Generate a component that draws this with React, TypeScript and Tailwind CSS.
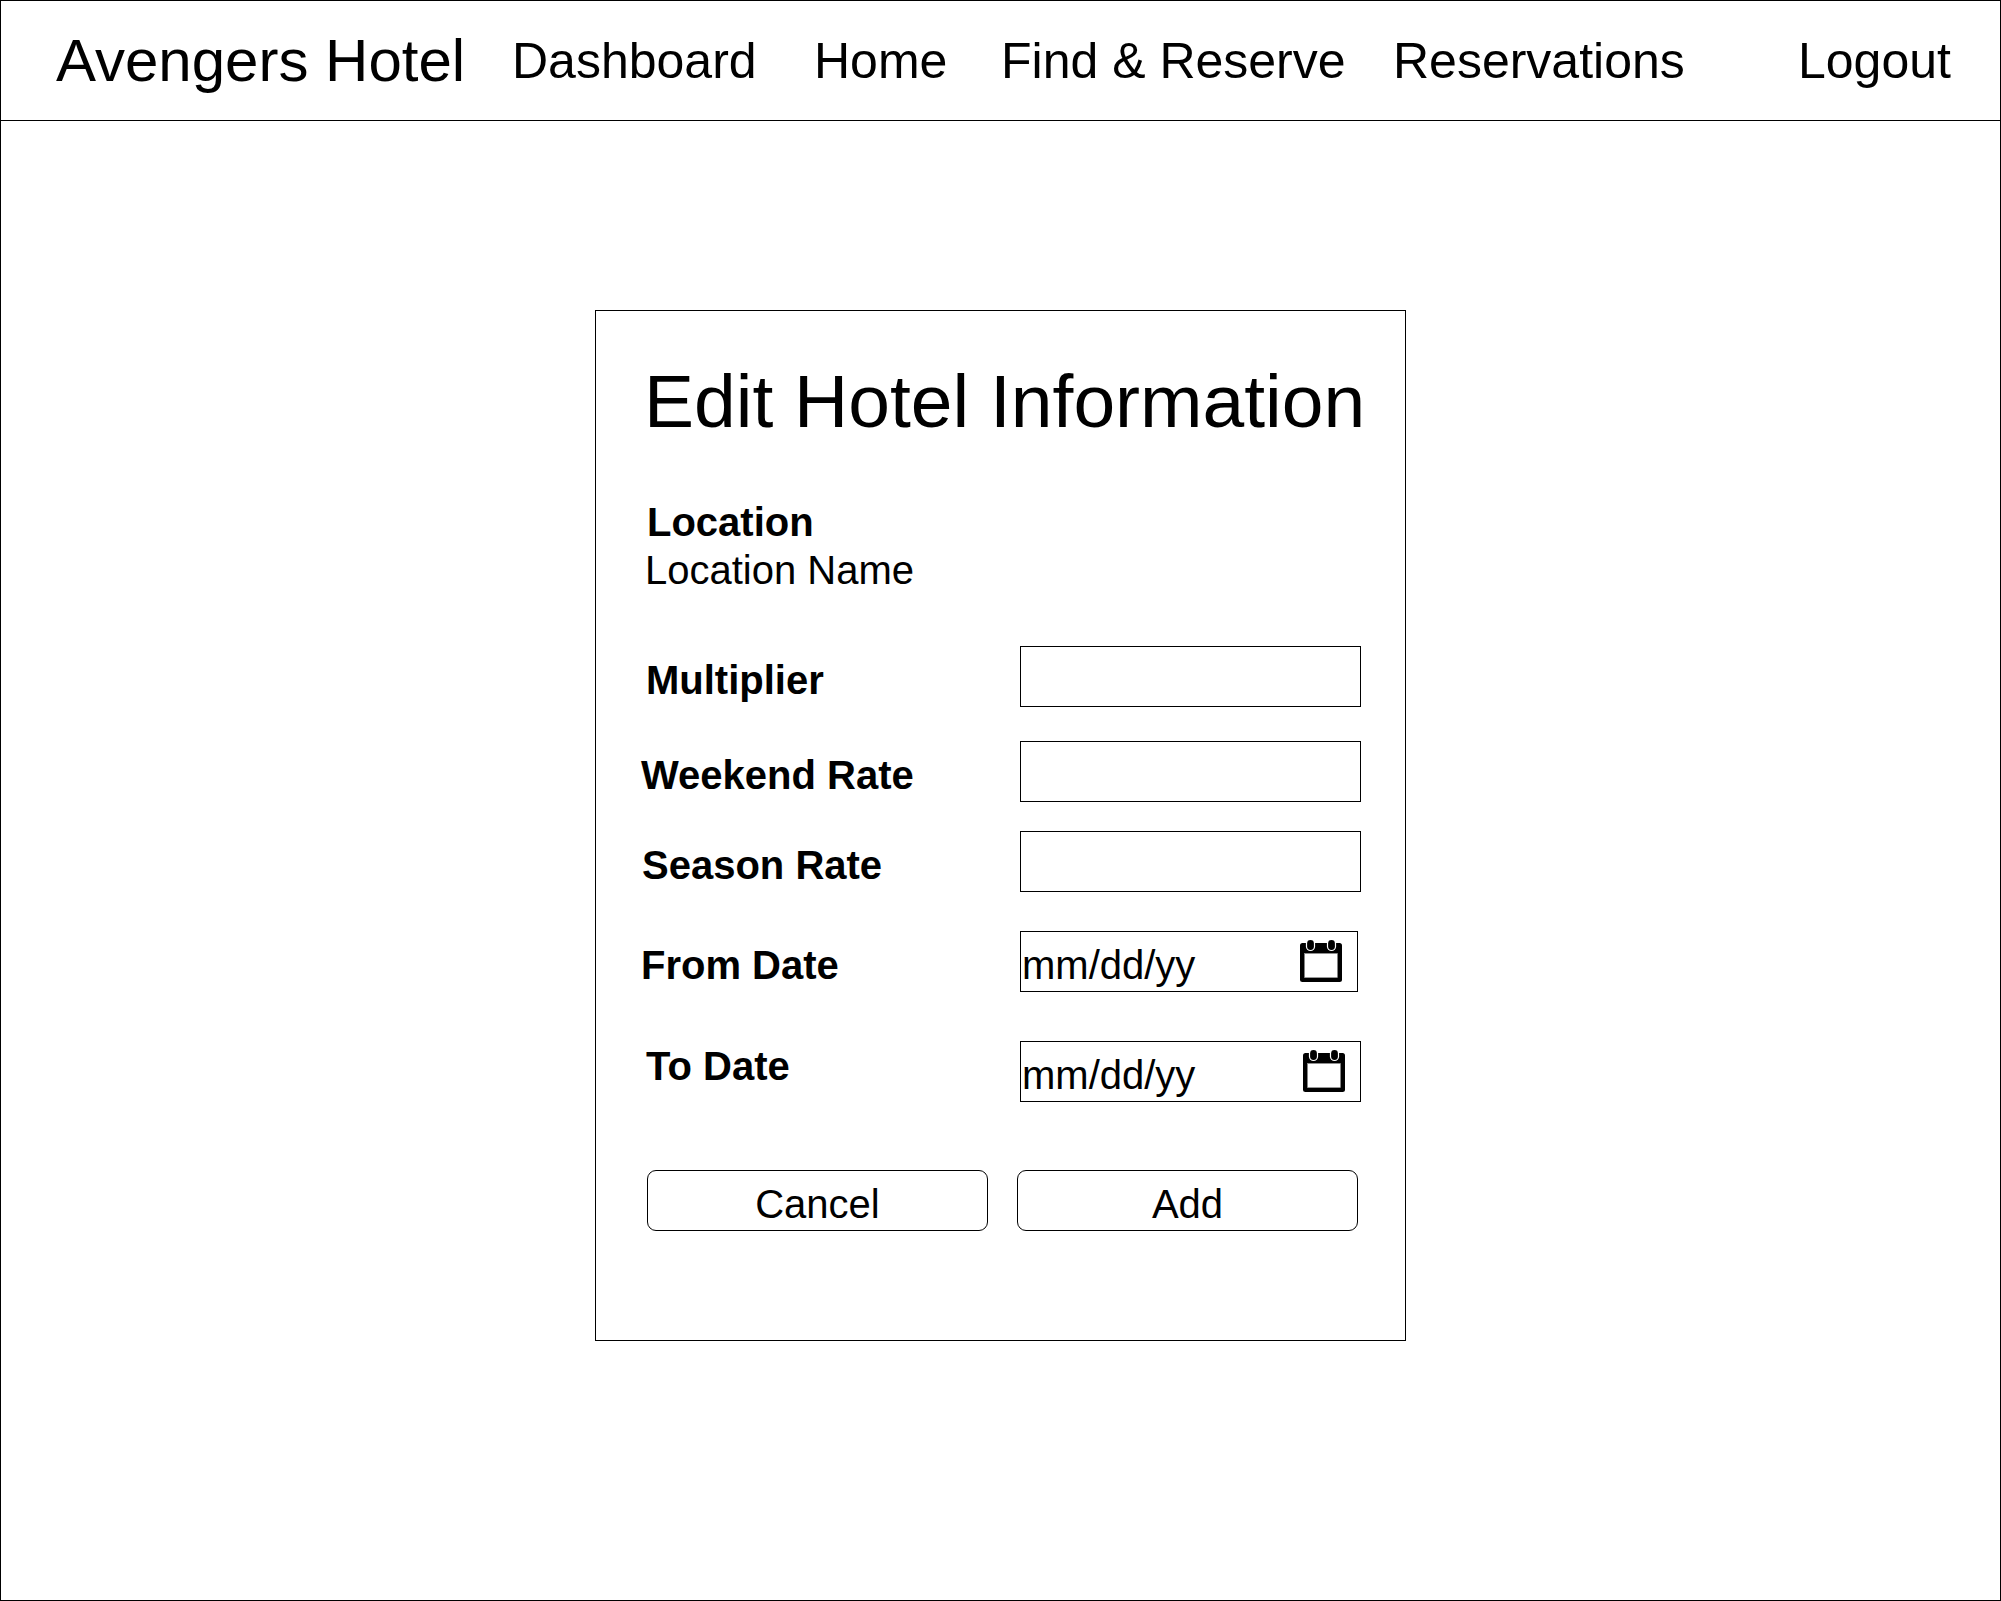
import type { ReactNode } from "react";

const NAV_ITEMS = [
  { label: "Dashboard", width: "w-[302px]" },
  { label: "Home", width: "w-[187px]" },
  { label: "Find & Reserve", width: "w-[392px]" },
  { label: "Reservations", width: "w-[405px]" },
];

function CalendarIcon() {
  return (
    <svg className="h-[42px] w-[42px] shrink-0" viewBox="0 0 42 42" aria-hidden="true">
      <rect x="0" y="3" width="42" height="39" rx="2.5" fill="#000" />
      <rect x="4.6" y="13.5" width="32.8" height="24.1" fill="#fff" stroke="#999" strokeWidth="0.6" />
      <rect x="5.9" y="-1" width="9.2" height="12" rx="4.6" fill="#fff" />
      <rect x="26.9" y="-1" width="9.2" height="12" rx="4.6" fill="#fff" />
      <rect x="7.1" y="0" width="6.8" height="10" rx="3.4" fill="#000" />
      <rect x="28.1" y="0" width="6.8" height="10" rx="3.4" fill="#000" />
    </svg>
  );
}

function Row({
  label,
  spacing,
  labelClass,
  children,
}: {
  label: string;
  spacing: string;
  labelClass: string;
  children: ReactNode;
}) {
  return (
    <div className={`flex h-[61px] ${spacing}`}>
      <div className={`w-[424px] shrink-0 font-bold leading-[61px] ${labelClass}`}>{label}</div>
      {children}
    </div>
  );
}

function TextField({ name }: { name: string }) {
  return <input aria-label={name} className="h-[61px] w-[341px] border border-black bg-white px-1 outline-none" />;
}

function DateField({ width }: { width: string }) {
  return (
    <div className={`flex h-[61px] items-start justify-between border border-black pl-px pr-[15px] ${width}`}>
      <span className="pt-[3px] leading-[61px]">mm/dd/yy</span>
      <span className="pt-2">
        <CalendarIcon />
      </span>
    </div>
  );
}

export default function App() {
  return (
    <div className="flex h-[1601px] w-[2001px] flex-col border border-black bg-white font-['Liberation_Sans',Arial,sans-serif] text-black">
      <header className="flex h-[120px] shrink-0 items-center whitespace-nowrap border-b border-black pl-[55px] text-[50px]">
        <div className="w-[456px] text-[60px]">Avengers Hotel</div>
        <nav className="flex pt-[2px]">
          {NAV_ITEMS.map((item) => (
            <a key={item.label} className={item.width}>
              {item.label}
            </a>
          ))}
          <a>Logout</a>
        </nav>
      </header>

      <main className="pl-[594px] pt-[189px]">
        <section className="h-[1031px] w-[811px] whitespace-nowrap border border-black pt-10 text-[40px]">
          <h1 className="pl-12 text-[75px] leading-[100px]">Edit Hotel Information</h1>

          <div className="mt-[47px] leading-[48px]">
            <div className="pl-[51px] font-bold">Location</div>
            <div className="pl-[49px]">Location Name</div>
          </div>

          <Row label="Multiplier" spacing="mt-[52px]" labelClass="pl-[50px] pt-[4px]">
            <TextField name="Multiplier" />
          </Row>
          <Row label="Weekend Rate" spacing="mt-[34px]" labelClass="pl-[45px] pt-[4px]">
            <TextField name="Weekend Rate" />
          </Row>
          <Row label="Season Rate" spacing="mt-[29px]" labelClass="pl-[46px] pt-[4px]">
            <TextField name="Season Rate" />
          </Row>
          <Row label="From Date" spacing="mt-[39px]" labelClass="pl-[45px] pt-[4px]">
            <DateField width="w-[338px]" />
          </Row>
          <Row label="To Date" spacing="mt-[49px]" labelClass="pl-[50px] -mt-[5px]">
            <DateField width="w-[341px]" />
          </Row>

          <div className="mt-[68px] flex gap-[29px] pl-[51px]">
            <button className="h-[61px] w-[341px] rounded-[9px] border border-black pt-[7px] leading-[52px]">Cancel</button>
            <button className="h-[61px] w-[341px] rounded-[9px] border border-black pt-[7px] leading-[52px]">Add</button>
          </div>
        </section>
      </main>
    </div>
  );
}
